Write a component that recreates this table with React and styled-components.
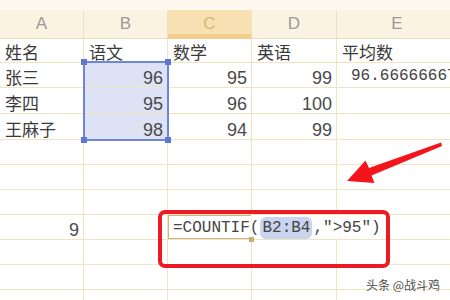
import React from "react";
import styled, { createGlobalStyle } from "styled-components";

const GlobalStyle = createGlobalStyle`
  html, body { margin: 0; padding: 0; background: #fff; }
  body { font-family: "Liberation Sans", Arial, sans-serif; }
`;

const COLS = [84, 84, 84, 85, 121];
const LETTERS = ["A", "B", "C", "D", "E"];
const ROW_H = [24, 25, 26, 26, 25, 25, 25, 25, 25, 25, 25];
const LINE = "#f3e3bf";
const CJK = `"Noto Sans CJK SC", "Noto Sans", sans-serif`;
const MONO = `"Liberation Mono", "DejaVu Sans Mono", monospace`;

const Sheet = styled.div`
  position: relative;
  width: 450px;
  height: 300px;
  overflow: hidden;
  background: #fff;
`;

const TopStrip = styled.div`
  height: 10px;
  background: #fdf9f1;
`;

const HeaderRow = styled.div`
  display: grid;
  grid-template-columns: ${COLS.map((c) => c + "px").join(" ")};
  height: 29px;
  background: #fbf3e2;
`;

const HeaderCell = styled.div`
  box-sizing: border-box;
  display: flex;
  align-items: center;
  justify-content: center;
  border-right: 1px solid #f0e0bd;
  border-bottom: ${(p) => (p.$active ? "5px solid #f2cf8c" : "1px solid #eddcb6")};
  padding-top: ${(p) => (p.$active ? "4px" : "0")};
  background: ${(p) => (p.$active ? "#f7e0b2" : "transparent")};
  color: ${(p) => (p.$active ? "#d9b676" : "#9a9a9a")};
  font-size: 17px;
`;

const Grid = styled.div`
  position: relative;
`;

const Row = styled.div`
  display: grid;
  grid-template-columns: ${COLS.map((c) => c + "px").join(" ")};
  height: ${(p) => p.$h}px;
`;

const Cell = styled.div`
  position: relative;
  box-sizing: border-box;
  display: flex;
  align-items: flex-end;
  justify-content: ${(p) => (p.$num ? "flex-end" : "flex-start")};
  padding: 0 ${(p) => (p.$num ? "4px" : "0")} 0 ${(p) => (p.$num ? "0" : "5px")};
  border-right: ${(p) => (p.$spill ? "1px solid transparent" : `1px solid ${LINE}`)};
  border-bottom: 1px solid ${LINE};
  background: ${(p) => (p.$sel ? "#dde3f5" : "transparent")};
  box-shadow: ${(p) =>
    p.$active ? "inset 1px 1px 0 #ccb584, inset 0 -1px 0 #ccb584" : "none"};
  white-space: nowrap;
  overflow: visible;
  z-index: ${(p) => (p.$active ? 2 : 1)};
`;

const CjkText = styled.span`
  font-family: ${CJK};
  font-size: 17px;
  line-height: 20px;
  color: #3a3a3a;
`;

const NumText = styled.span`
  font-family: "Liberation Sans", Arial, sans-serif;
  font-size: 18px;
  line-height: 18px;
  color: #4a4a4a;
`;

const MonoText = styled.span`
  font-family: ${MONO};
  font-size: ${(p) => p.$size || 16}px;
  line-height: 20px;
  color: #444;
  padding-left: ${(p) => p.$indent || 0}px;
  padding-bottom: 1px;
`;

const RefChip = styled.span`
  background: #c9d5ef;
  border-radius: 6px;
  padding: 2px 2px;
  margin: 0 1px;
`;

const Selection = styled.div`
  position: absolute;
  box-sizing: border-box;
  border: 2px solid #6e86d8;
  pointer-events: none;
  z-index: 3;
`;

const Handle = styled.span`
  position: absolute;
  width: 6px;
  height: 6px;
  background: #5d78d2;
  ${(p) => (p.$top ? "top: -4px;" : "bottom: -4px;")}
  ${(p) => (p.$left ? "left: -4px;" : "right: -4px;")}
`;

const FillHandle = styled.span`
  position: absolute;
  right: -3px;
  bottom: -3px;
  width: 5px;
  height: 5px;
  background: #c9ad74;
`;

const RedBox = styled.div`
  position: absolute;
  left: 158px;
  top: 210px;
  width: 232px;
  height: 58px;
  box-sizing: border-box;
  border: 4px solid #ec1b23;
  border-radius: 7px;
  z-index: 4;
`;

const ArrowSvg = styled.svg`
  position: absolute;
  left: 0;
  top: 0;
  width: 450px;
  height: 300px;
  pointer-events: none;
  z-index: 5;
`;

const Watermark = styled.div`
  position: absolute;
  right: 10px;
  bottom: 7px;
  font-family: ${CJK};
  font-size: 12px;
  color: #4d4d4d;
  text-shadow: 0 0 2px #fff, 0 0 2px #fff;
  z-index: 6;
`;

const rows = [
  [
    { t: "姓名", cjk: true },
    { t: "语文", cjk: true },
    { t: "数学", cjk: true },
    { t: "英语", cjk: true },
    { t: "平均数", cjk: true },
  ],
  [{ t: "张三", cjk: true }, { t: "96", num: true, sel: true }, { t: "95", num: true }, { t: "99", num: true }, { t: "96.66666667", mono: true }],
  [{ t: "李四", cjk: true }, { t: "95", num: true, sel: true }, { t: "96", num: true }, { t: "100", num: true }, {}],
  [{ t: "王麻子", cjk: true }, { t: "98", num: true, sel: true }, { t: "94", num: true }, { t: "99", num: true }, {}],
  [{}, {}, {}, {}, {}],
  [{}, {}, {}, {}, {}],
  [{}, {}, {}, {}, {}],
  [{ t: "9", num: true }, {}, { formula: true, active: true, spill: true }, { spill: true }, {}],
  [{}, {}, {}, {}, {}],
  [{}, {}, {}, {}, {}],
  [{}, {}, {}, {}, {}],
];

function CellContent({ c }) {
  if (c.formula) {
    return (
      <MonoText $indent={-1}>
        =COUNTIF(<RefChip>B2:B4</RefChip>,"&gt;95")
      </MonoText>
    );
  }
  if (!c.t) return null;
  if (c.cjk) return <CjkText>{c.t}</CjkText>;
  if (c.mono) return <MonoText $size={16} $indent={9}>{c.t}</MonoText>;
  return <NumText>{c.t}</NumText>;
}

export default function App() {
  const selTop = ROW_H[0] - 2;
  const selHeight = ROW_H[1] + ROW_H[2] + ROW_H[3] + 3;
  return (
    <>
      <GlobalStyle />
      <Sheet>
        <TopStrip />
        <HeaderRow>
          {LETTERS.map((l, i) => (
            <HeaderCell key={l} $active={i === 2}>
              {l}
            </HeaderCell>
          ))}
        </HeaderRow>
        <Grid>
          {rows.map((r, ri) => (
            <Row key={ri} $h={ROW_H[ri]}>
              {r.map((c, ci) => (
                <Cell key={ci} $num={c.num} $sel={c.sel} $active={c.active} $spill={c.spill}>
                  <CellContent c={c} />
                  {c.active && <FillHandle />}
                </Cell>
              ))}
            </Row>
          ))}
          <Selection style={{ left: COLS[0] - 1, top: selTop, width: COLS[1] + 2, height: selHeight }}>
            <Handle $top $left />
            <Handle $top />
            <Handle $left />
            <Handle />
          </Selection>
        </Grid>
        <RedBox />
        <ArrowSvg viewBox="0 0 450 300">
          <polygon
            points="441,142.5 369,168 365.5,160.5 347,181 374.5,183 371.5,175.5 442,146"
            fill="#f4141b"
          />
        </ArrowSvg>
        <Watermark>头条 @战斗鸡</Watermark>
      </Sheet>
    </>
  );
}
